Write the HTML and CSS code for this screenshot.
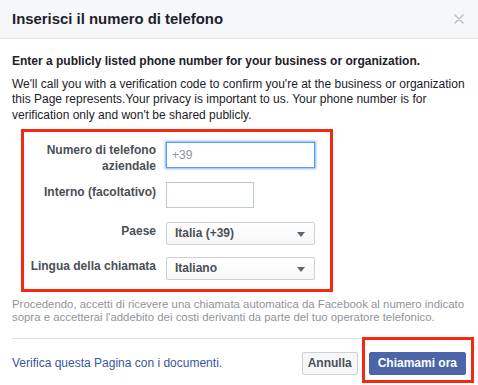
FILE: index.html
```html
<!DOCTYPE html>
<html lang="it">
<head>
<meta charset="utf-8">
<title>Inserisci il numero di telefono</title>
<link rel="stylesheet" href="styles.css">
</head>
<body>
<div class="dialog">
  <div class="header">
    <h1 class="title">Inserisci il numero di telefono</h1>
    <svg class="close" width="10" height="10" viewBox="0 0 10 10" aria-hidden="true">
      <path d="M1 1 L9 9 M9 1 L1 9" stroke="#bec2c9" stroke-width="1.6" fill="none" stroke-linecap="round"/>
    </svg>
  </div>
  <div class="body">
    <p class="lead">Enter a publicly listed phone number for your business or organization.</p>
    <p class="desc">We'll call you with a verification code to confirm you're at the business or organization this Page represents.Your privacy is important to us. Your phone number is for verification only and won't be shared publicly.</p>
    <div class="form">
      <label class="label">Numero di telefono aziendale</label>
      <div class="field"><div class="input focus"><span class="placeholder">+39</span></div></div>
      <label class="label label-pad">Interno (facoltativo)</label>
      <div class="field"><div class="input small"></div></div>
      <label class="label label-sel">Paese</label>
      <div class="field"><div class="select">Italia (+39)<span class="arrow"></span></div></div>
      <label class="label label-sel">Lingua della chiamata</label>
      <div class="field"><div class="select">Italiano<span class="arrow"></span></div></div>
    </div>
    <p class="note">Procedendo, accetti di ricevere una chiamata automatica da Facebook al numero indicato sopra e accetterai l'addebito dei costi derivanti da parte del tuo operatore telefonico.</p>
  </div>
  <div class="footer">
    <a class="link" href="#">Verifica questa Pagina con i documenti.</a>
    <div class="buttons">
      <button class="btn">Annulla</button>
      <div class="primary-wrap">
        <button class="btn btn-primary">Chiamami ora</button>
        <span class="highlight"></span>
      </div>
    </div>
  </div>
</div>
</body>
</html>
```

FILE: styles.css
```css
* { box-sizing: border-box; }
html, body { margin: 0; padding: 0; }
body {
  background: #fff;
  font-family: "Liberation Sans", Arial, Helvetica, sans-serif;
  color: #1d2129;
  width: 478px;
  height: 385px;
  overflow: hidden;
}
.dialog { width: 478px; }
.header {
  height: 39px;
  background: #f6f7f9;
  border-bottom: 1px solid #e5e5e5;
  display: flex;
  align-items: center;
  justify-content: space-between;
  padding: 0 14px 0 12px;
}
.title {
  margin: 0;
  font-size: 14.9px;
  font-weight: bold;
  color: #1d2129;
  line-height: 18px;
}
.close { display: block; margin-top: 0; }
.body { padding: 14px 12px 0; }
.lead {
  margin: 0;
  font-size: 12px;
  font-weight: bold;
  line-height: 16px;
}
.desc {
  margin: 8px 0 0;
  font-size: 12px;
  line-height: 15.3px;
}
.form {
  margin: 6px 0 0 9px;
  width: 312px;
  border: 3px solid #f4290f;
  padding: 10px 0 9px;
  display: grid;
  grid-template-columns: 132px 1fr;
  grid-template-rows: 40px 40px 35px auto;
  column-gap: 10px;
}
.label {
  font-size: 12px;
  font-weight: bold;
  color: #4b4f56;
  text-align: right;
  line-height: 16px;
  padding-top: 0;
}
.label-pad { padding-top: 2px; }
.label-sel { padding-top: 1px; }
.field { display: block; }
.input {
  height: 26px;
  width: 149px;
  border: 1px solid #bdc7d8;
  background: #fff;
  display: flex;
  align-items: center;
  padding-left: 5px;
}
.input.focus {
  border-color: #5b9dd9;
  box-shadow: 0 0 2px 1px rgba(80, 144, 255, 0.7);
}
.input.small { width: 88px; }
.placeholder { font-size: 12px; color: #90949c; }
.select {
  position: relative;
  height: 23px;
  width: 149px;
  border: 1px solid #ced0d4;
  border-radius: 2px;
  background: linear-gradient(#fff, #f6f7f9);
  font-size: 12px;
  font-weight: bold;
  color: #4b4f56;
  display: flex;
  align-items: center;
  padding-left: 8px;
}
.arrow {
  position: absolute;
  right: 9px;
  top: 9px;
  width: 0;
  height: 0;
  border-left: 4.5px solid transparent;
  border-right: 4.5px solid transparent;
  border-top: 5px solid #5e6470;
}
.note {
  margin: 6px 0 0;
  font-size: 11.4px;
  line-height: 13.5px;
  color: #90949c;
}
.footer {
  margin: 13px 12px 0;
  border-top: 1px solid #dddfe2;
  padding-top: 13px;
  display: flex;
  justify-content: space-between;
  align-items: center;
}
.link {
  font-size: 12px;
  color: #365899;
  text-decoration: none;
}
.buttons { display: flex; align-items: center; gap: 11px; }
.btn {
  height: 23px;
  padding: 0 5px;
  font-family: "Liberation Sans", Arial, sans-serif;
  font-size: 12px;
  font-weight: bold;
  color: #4b4f56;
  background: #f6f7f9;
  border: 1px solid #ced0d4;
  border-radius: 2px;
  line-height: 21px;
}
.btn-primary {
  background: #4c65a9;
  border-color: #4c65a9;
  color: #fff;
  padding: 0 8px;
}
.primary-wrap { position: relative; display: flex; }
.highlight {
  position: absolute;
  left: -7px;
  right: -8px;
  top: -15px;
  bottom: -8px;
  border: 3px solid #f4290f;
  pointer-events: none;
}
```
